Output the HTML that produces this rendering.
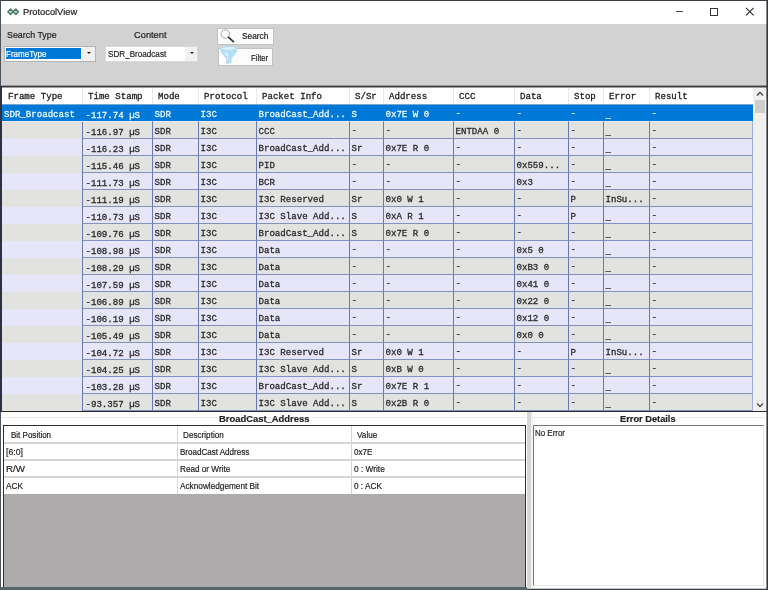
<!DOCTYPE html>
<html><head><meta charset="utf-8"><title>ProtocolView</title>
<style>
html,body{margin:0;padding:0;}
body{width:768px;height:590px;overflow:hidden;background:#fff;position:relative;font-family:"Liberation Sans",sans-serif;color:#222;}
div,span{position:absolute;box-sizing:border-box;white-space:nowrap;}
.m{font-family:"Liberation Mono",monospace;font-size:9.1px;line-height:17px;height:17px;color:#2a2a2a;-webkit-text-stroke:0.3px #2a2a2a;transform:scaleY(0.9);transform-origin:0 70%;}
.h{font-family:"Liberation Mono",monospace;font-size:9.1px;line-height:17px;height:17px;color:#222;-webkit-text-stroke:0.3px #222;transform:scaleY(0.9);transform-origin:0 70%;}
.c{border-right:1px solid #6b78b0;border-bottom:1px solid #8490c0;height:17px;overflow:hidden;}
.g{background:#e2e2e1;}
.l{background:#e6e6f8;}
.s{background:#0078d7;border-color:#0078d7;border-bottom-color:#e4ecfa;}
.s .m,.s.m{color:#e8f6ff;-webkit-text-stroke-color:#e8f6ff;}
</style></head><body>

<div style="left:0;top:0;width:768px;height:590px;background:#fff;will-change:transform;overflow:hidden;">
<div style="left:0;top:0;width:768px;height:24px;background:#fff;"></div>
<svg style="position:absolute;left:7px;top:7.5px" width="13" height="8" viewBox="0 0 13 8"><g fill="#c4e0d6" stroke="#4d786a" stroke-width="1.5" stroke-linejoin="round"><path d="M0.9 3.8 L3.5 1.1 L6.1 3.8 L3.5 6.5 Z"/><path d="M6.2 3.8 L8.8 1.1 L11.4 3.8 L8.8 6.5 Z"/></g></svg>
<span style="left:23.20px;top:4.64px;font-family:'Liberation Sans',sans-serif;font-size:9.7px;font-weight:normal;line-height:14px;height:14px;color:#1c1c1c;-webkit-text-stroke:0.2px #1c1c1c;transform-origin:0 50%;transform:scaleX(0.960);">ProtocolView</span>
<div style="left:675.7px;top:11.1px;width:7.6px;height:1.2px;background:#4a4a4a;"></div>
<div style="left:710px;top:7.7px;width:8px;height:8px;border:1px solid #333;"></div>
<svg style="position:absolute;left:745px;top:7px" width="10" height="10" viewBox="0 0 10 10"><path d="M1 0.8 L8.6 8.4 M8.6 0.8 L1 8.4" stroke="#333" stroke-width="1.2" fill="none"/></svg>
<div style="left:0;top:24px;width:768px;height:62px;background:#d3d2d2;"></div>
<span style="left:6.50px;top:27.64px;font-family:'Liberation Sans',sans-serif;font-size:9.7px;font-weight:normal;line-height:14px;height:14px;color:#1c1c1c;-webkit-text-stroke:0.2px #1c1c1c;transform-origin:0 50%;transform:scaleX(0.915);">Search Type</span>
<span style="left:134.00px;top:27.64px;font-family:'Liberation Sans',sans-serif;font-size:9.7px;font-weight:normal;line-height:14px;height:14px;color:#1c1c1c;-webkit-text-stroke:0.2px #1c1c1c;transform-origin:0 50%;transform:scaleX(0.959);">Content</span>
<div style="left:4px;top:46px;width:92px;height:15.5px;background:#fff;border:1px solid #b4b4b4;"></div>
<div style="left:5.5px;top:47.8px;width:75.5px;height:11.5px;background:#0078d7;"></div>
<span style="left:6.00px;top:46.67px;font-family:'Liberation Sans',sans-serif;font-size:9.6px;font-weight:normal;line-height:14px;height:14px;color:#fff;-webkit-text-stroke:0.2px #fff;transform-origin:0 50%;transform:scaleX(0.835);">FrameType</span>
<div style="left:82px;top:47px;width:13px;height:13.5px;background:#f0f0f0;"></div>
<div style="left:87.4px;top:52.4px;width:0;height:0;border-left:2.2px solid transparent;border-right:2.2px solid transparent;border-top:2.4px solid #222;"></div>
<div style="left:104.5px;top:45.5px;width:93.5px;height:16.5px;background:#fff;border:1px solid #dadada;"></div>
<span style="left:107.50px;top:46.67px;font-family:'Liberation Sans',sans-serif;font-size:9.6px;font-weight:normal;line-height:14px;height:14px;color:#222;-webkit-text-stroke:0.2px #222;transform-origin:0 50%;transform:scaleX(0.846);">SDR_Broadcast</span>
<div style="left:184.5px;top:46.5px;width:12.5px;height:14.5px;background:#f2f2f2;"></div>
<div style="left:189.6px;top:52.4px;width:0;height:0;border-left:2.2px solid transparent;border-right:2.2px solid transparent;border-top:2.4px solid #222;"></div>
<div style="left:217.3px;top:27.5px;width:56.3px;height:17.1px;background:#fcfcfc;border:1px solid #c2c2c2;"></div>
<svg style="position:absolute;left:219px;top:28px" width="18" height="17" viewBox="0 0 18 17"><circle cx="6.25" cy="6" r="4.2" fill="#fbfcfd" stroke="#a9adb0" stroke-width="1"/><path d="M9.6 9.3 L14.4 13.7" stroke="#333" stroke-width="1.7" stroke-linecap="round"/></svg>
<span style="left:242.00px;top:28.67px;font-family:'Liberation Sans',sans-serif;font-size:9.6px;font-weight:normal;line-height:14px;height:14px;color:#222;-webkit-text-stroke:0.2px #222;transform-origin:0 50%;transform:scaleX(0.865);">Search</span>
<div style="left:218px;top:48.1px;width:55px;height:17.7px;background:#fcfcfc;border:1px solid #c2c2c2;"></div>
<svg style="position:absolute;left:220px;top:45px" width="18" height="20" viewBox="0 0 18 20"><path d="M1 3.6 L16.6 3.6 L16.6 6.6 L11 13.6 L11 17.4 L6.6 18.4 L6.6 13.6 L1 6.6 Z" fill="#b3e0f6" stroke="#a3d6f0" stroke-width="0.7"/><ellipse cx="8.8" cy="3.4" rx="7.8" ry="1.9" fill="#dbf1fb" stroke="#a9daf1" stroke-width="0.7"/><path d="M4 7.5 L8 7.5 L8 16 L7.4 16 L7.4 12.8 Z" fill="#dff3fc" opacity="0.8"/></svg>
<span style="left:250.50px;top:50.67px;font-family:'Liberation Sans',sans-serif;font-size:9.6px;font-weight:normal;line-height:14px;height:14px;color:#222;-webkit-text-stroke:0.2px #222;transform-origin:0 50%;transform:scaleX(0.806);">Filter</span>
<div style="left:0;top:85px;width:768px;height:1px;background:rgba(60,60,60,0.4);"></div>
<div style="left:0;top:86px;width:768px;height:1px;background:#3a3a3a;"></div>
<div style="left:0;top:87px;width:768px;height:1px;background:rgba(60,60,60,0.5);"></div>
<div style="left:2px;top:88px;width:764px;height:17px;background:#fff;"></div>
<span class="h" style="left:8px;top:88px;">Frame Type</span>
<span class="h" style="left:88px;top:88px;">Time Stamp</span>
<div style="left:82px;top:88px;width:1px;height:16px;background:#e9e9e9;"></div>
<span class="h" style="left:158px;top:88px;">Mode</span>
<div style="left:152px;top:88px;width:1px;height:16px;background:#e9e9e9;"></div>
<span class="h" style="left:204px;top:88px;">Protocol</span>
<div style="left:198px;top:88px;width:1px;height:16px;background:#e9e9e9;"></div>
<span class="h" style="left:262px;top:88px;">Packet Info</span>
<div style="left:256px;top:88px;width:1px;height:16px;background:#e9e9e9;"></div>
<span class="h" style="left:355px;top:88px;">S/Sr</span>
<div style="left:349px;top:88px;width:1px;height:16px;background:#e9e9e9;"></div>
<span class="h" style="left:389px;top:88px;">Address</span>
<div style="left:383px;top:88px;width:1px;height:16px;background:#e9e9e9;"></div>
<span class="h" style="left:459px;top:88px;">CCC</span>
<div style="left:453px;top:88px;width:1px;height:16px;background:#e9e9e9;"></div>
<span class="h" style="left:520px;top:88px;">Data</span>
<div style="left:514px;top:88px;width:1px;height:16px;background:#e9e9e9;"></div>
<span class="h" style="left:574px;top:88px;">Stop</span>
<div style="left:568px;top:88px;width:1px;height:16px;background:#e9e9e9;"></div>
<span class="h" style="left:609px;top:88px;">Error</span>
<div style="left:603px;top:88px;width:1px;height:16px;background:#e9e9e9;"></div>
<span class="h" style="left:655px;top:88px;">Result</span>
<div style="left:649px;top:88px;width:1px;height:16px;background:#e9e9e9;"></div>
<div class="s" style="left:2px;top:105px;width:80px;height:17px;"></div>
<span class="m" style="left:4px;top:105.5px;color:#e8f6ff;-webkit-text-stroke-color:#e8f6ff;">SDR_Broadcast</span>
<div style="left:82px;top:105px;width:1px;height:17px;background:#0078d7;"></div>
<div class="c s" style="left:83px;top:105px;width:70px;"><span class="m" style="left:2.5px;top:1.5px;">-117.74 µS</span></div>
<div class="c s" style="left:153px;top:105px;width:46px;"><span class="m" style="left:1.5px;top:0.5px;">SDR</span></div>
<div class="c s" style="left:199px;top:105px;width:58px;"><span class="m" style="left:1.5px;top:0.5px;">I3C</span></div>
<div class="c s" style="left:257px;top:105px;width:93px;"><span class="m" style="left:1.5px;top:0.5px;">BroadCast_Add...</span></div>
<div class="c s" style="left:350px;top:105px;width:34px;"><span class="m" style="left:1.5px;top:0.5px;">S</span></div>
<div class="c s" style="left:384px;top:105px;width:70px;"><span class="m" style="left:1.5px;top:0.5px;">0x7E W 0</span></div>
<div class="c s" style="left:454px;top:105px;width:61px;"><span class="m" style="left:1.5px;top:-0.4px;">-</span></div>
<div class="c s" style="left:515px;top:105px;width:54px;"><span class="m" style="left:1.5px;top:-0.4px;">-</span></div>
<div class="c s" style="left:569px;top:105px;width:35px;"><span class="m" style="left:1.5px;top:-0.4px;">-</span></div>
<div class="c s" style="left:604px;top:105px;width:46px;"><span class="m" style="left:1.5px;top:1.5px;">_</span></div>
<div class="c s" style="left:650px;top:105px;width:103px;"><span class="m" style="left:1.5px;top:-0.4px;">-</span></div>
<div class="g" style="left:2px;top:122px;width:80px;height:17px;"></div>
<div style="left:82px;top:122px;width:1px;height:17px;background:#6b78b0;"></div>
<div class="c g" style="left:83px;top:122px;width:70px;"><span class="m" style="left:2.5px;top:1.5px;">-116.97 µS</span></div>
<div class="c g" style="left:153px;top:122px;width:46px;"><span class="m" style="left:1.5px;top:0.5px;">SDR</span></div>
<div class="c g" style="left:199px;top:122px;width:58px;"><span class="m" style="left:1.5px;top:0.5px;">I3C</span></div>
<div class="c g" style="left:257px;top:122px;width:93px;"><span class="m" style="left:1.5px;top:0.5px;">CCC</span></div>
<div class="c g" style="left:350px;top:122px;width:34px;"><span class="m" style="left:1.5px;top:-0.4px;">-</span></div>
<div class="c g" style="left:384px;top:122px;width:70px;"><span class="m" style="left:1.5px;top:-0.4px;">-</span></div>
<div class="c g" style="left:454px;top:122px;width:61px;"><span class="m" style="left:1.5px;top:0.5px;">ENTDAA 0</span></div>
<div class="c g" style="left:515px;top:122px;width:54px;"><span class="m" style="left:1.5px;top:-0.4px;">-</span></div>
<div class="c g" style="left:569px;top:122px;width:35px;"><span class="m" style="left:1.5px;top:-0.4px;">-</span></div>
<div class="c g" style="left:604px;top:122px;width:46px;"><span class="m" style="left:1.5px;top:1.5px;">_</span></div>
<div class="c g" style="left:650px;top:122px;width:103px;border-right-color:#a4add4;"><span class="m" style="left:1.5px;top:-0.4px;">-</span></div>
<div class="l" style="left:2px;top:139px;width:80px;height:17px;"></div>
<div style="left:82px;top:139px;width:1px;height:17px;background:#6b78b0;"></div>
<div class="c l" style="left:83px;top:139px;width:70px;"><span class="m" style="left:2.5px;top:1.5px;">-116.23 µS</span></div>
<div class="c l" style="left:153px;top:139px;width:46px;"><span class="m" style="left:1.5px;top:0.5px;">SDR</span></div>
<div class="c l" style="left:199px;top:139px;width:58px;"><span class="m" style="left:1.5px;top:0.5px;">I3C</span></div>
<div class="c l" style="left:257px;top:139px;width:93px;"><span class="m" style="left:1.5px;top:0.5px;">BroadCast_Add...</span></div>
<div class="c l" style="left:350px;top:139px;width:34px;"><span class="m" style="left:1.5px;top:0.5px;">Sr</span></div>
<div class="c l" style="left:384px;top:139px;width:70px;"><span class="m" style="left:1.5px;top:0.5px;">0x7E R 0</span></div>
<div class="c l" style="left:454px;top:139px;width:61px;"><span class="m" style="left:1.5px;top:-0.4px;">-</span></div>
<div class="c l" style="left:515px;top:139px;width:54px;"><span class="m" style="left:1.5px;top:-0.4px;">-</span></div>
<div class="c l" style="left:569px;top:139px;width:35px;"><span class="m" style="left:1.5px;top:-0.4px;">-</span></div>
<div class="c l" style="left:604px;top:139px;width:46px;"><span class="m" style="left:1.5px;top:1.5px;">_</span></div>
<div class="c l" style="left:650px;top:139px;width:103px;border-right-color:#a4add4;"><span class="m" style="left:1.5px;top:-0.4px;">-</span></div>
<div class="g" style="left:2px;top:156px;width:80px;height:17px;"></div>
<div style="left:82px;top:156px;width:1px;height:17px;background:#6b78b0;"></div>
<div class="c g" style="left:83px;top:156px;width:70px;"><span class="m" style="left:2.5px;top:1.5px;">-115.46 µS</span></div>
<div class="c g" style="left:153px;top:156px;width:46px;"><span class="m" style="left:1.5px;top:0.5px;">SDR</span></div>
<div class="c g" style="left:199px;top:156px;width:58px;"><span class="m" style="left:1.5px;top:0.5px;">I3C</span></div>
<div class="c g" style="left:257px;top:156px;width:93px;"><span class="m" style="left:1.5px;top:0.5px;">PID</span></div>
<div class="c g" style="left:350px;top:156px;width:34px;"><span class="m" style="left:1.5px;top:-0.4px;">-</span></div>
<div class="c g" style="left:384px;top:156px;width:70px;"><span class="m" style="left:1.5px;top:-0.4px;">-</span></div>
<div class="c g" style="left:454px;top:156px;width:61px;"><span class="m" style="left:1.5px;top:-0.4px;">-</span></div>
<div class="c g" style="left:515px;top:156px;width:54px;"><span class="m" style="left:1.5px;top:0.5px;">0x559...</span></div>
<div class="c g" style="left:569px;top:156px;width:35px;"><span class="m" style="left:1.5px;top:-0.4px;">-</span></div>
<div class="c g" style="left:604px;top:156px;width:46px;"><span class="m" style="left:1.5px;top:1.5px;">_</span></div>
<div class="c g" style="left:650px;top:156px;width:103px;border-right-color:#a4add4;"><span class="m" style="left:1.5px;top:-0.4px;">-</span></div>
<div class="l" style="left:2px;top:173px;width:80px;height:17px;"></div>
<div style="left:82px;top:173px;width:1px;height:17px;background:#6b78b0;"></div>
<div class="c l" style="left:83px;top:173px;width:70px;"><span class="m" style="left:2.5px;top:1.5px;">-111.73 µS</span></div>
<div class="c l" style="left:153px;top:173px;width:46px;"><span class="m" style="left:1.5px;top:0.5px;">SDR</span></div>
<div class="c l" style="left:199px;top:173px;width:58px;"><span class="m" style="left:1.5px;top:0.5px;">I3C</span></div>
<div class="c l" style="left:257px;top:173px;width:93px;"><span class="m" style="left:1.5px;top:0.5px;">BCR</span></div>
<div class="c l" style="left:350px;top:173px;width:34px;"><span class="m" style="left:1.5px;top:-0.4px;">-</span></div>
<div class="c l" style="left:384px;top:173px;width:70px;"><span class="m" style="left:1.5px;top:-0.4px;">-</span></div>
<div class="c l" style="left:454px;top:173px;width:61px;"><span class="m" style="left:1.5px;top:-0.4px;">-</span></div>
<div class="c l" style="left:515px;top:173px;width:54px;"><span class="m" style="left:1.5px;top:0.5px;">0x3</span></div>
<div class="c l" style="left:569px;top:173px;width:35px;"><span class="m" style="left:1.5px;top:-0.4px;">-</span></div>
<div class="c l" style="left:604px;top:173px;width:46px;"><span class="m" style="left:1.5px;top:1.5px;">_</span></div>
<div class="c l" style="left:650px;top:173px;width:103px;border-right-color:#a4add4;"><span class="m" style="left:1.5px;top:-0.4px;">-</span></div>
<div class="g" style="left:2px;top:190px;width:80px;height:17px;"></div>
<div style="left:82px;top:190px;width:1px;height:17px;background:#6b78b0;"></div>
<div class="c g" style="left:83px;top:190px;width:70px;"><span class="m" style="left:2.5px;top:1.5px;">-111.19 µS</span></div>
<div class="c g" style="left:153px;top:190px;width:46px;"><span class="m" style="left:1.5px;top:0.5px;">SDR</span></div>
<div class="c g" style="left:199px;top:190px;width:58px;"><span class="m" style="left:1.5px;top:0.5px;">I3C</span></div>
<div class="c g" style="left:257px;top:190px;width:93px;"><span class="m" style="left:1.5px;top:0.5px;">I3C Reserved</span></div>
<div class="c g" style="left:350px;top:190px;width:34px;"><span class="m" style="left:1.5px;top:0.5px;">Sr</span></div>
<div class="c g" style="left:384px;top:190px;width:70px;"><span class="m" style="left:1.5px;top:0.5px;">0x0 W 1</span></div>
<div class="c g" style="left:454px;top:190px;width:61px;"><span class="m" style="left:1.5px;top:-0.4px;">-</span></div>
<div class="c g" style="left:515px;top:190px;width:54px;"><span class="m" style="left:1.5px;top:-0.4px;">-</span></div>
<div class="c g" style="left:569px;top:190px;width:35px;"><span class="m" style="left:1.5px;top:0.5px;">P</span></div>
<div class="c g" style="left:604px;top:190px;width:46px;"><span class="m" style="left:1.5px;top:0.5px;">InSu...</span></div>
<div class="c g" style="left:650px;top:190px;width:103px;border-right-color:#a4add4;"><span class="m" style="left:1.5px;top:-0.4px;">-</span></div>
<div class="l" style="left:2px;top:207px;width:80px;height:17px;"></div>
<div style="left:82px;top:207px;width:1px;height:17px;background:#6b78b0;"></div>
<div class="c l" style="left:83px;top:207px;width:70px;"><span class="m" style="left:2.5px;top:1.5px;">-110.73 µS</span></div>
<div class="c l" style="left:153px;top:207px;width:46px;"><span class="m" style="left:1.5px;top:0.5px;">SDR</span></div>
<div class="c l" style="left:199px;top:207px;width:58px;"><span class="m" style="left:1.5px;top:0.5px;">I3C</span></div>
<div class="c l" style="left:257px;top:207px;width:93px;"><span class="m" style="left:1.5px;top:0.5px;">I3C Slave Add...</span></div>
<div class="c l" style="left:350px;top:207px;width:34px;"><span class="m" style="left:1.5px;top:0.5px;">S</span></div>
<div class="c l" style="left:384px;top:207px;width:70px;"><span class="m" style="left:1.5px;top:0.5px;">0xA R 1</span></div>
<div class="c l" style="left:454px;top:207px;width:61px;"><span class="m" style="left:1.5px;top:-0.4px;">-</span></div>
<div class="c l" style="left:515px;top:207px;width:54px;"><span class="m" style="left:1.5px;top:-0.4px;">-</span></div>
<div class="c l" style="left:569px;top:207px;width:35px;"><span class="m" style="left:1.5px;top:0.5px;">P</span></div>
<div class="c l" style="left:604px;top:207px;width:46px;"><span class="m" style="left:1.5px;top:1.5px;">_</span></div>
<div class="c l" style="left:650px;top:207px;width:103px;border-right-color:#a4add4;"><span class="m" style="left:1.5px;top:-0.4px;">-</span></div>
<div class="g" style="left:2px;top:224px;width:80px;height:17px;"></div>
<div style="left:82px;top:224px;width:1px;height:17px;background:#6b78b0;"></div>
<div class="c g" style="left:83px;top:224px;width:70px;"><span class="m" style="left:2.5px;top:1.5px;">-109.76 µS</span></div>
<div class="c g" style="left:153px;top:224px;width:46px;"><span class="m" style="left:1.5px;top:0.5px;">SDR</span></div>
<div class="c g" style="left:199px;top:224px;width:58px;"><span class="m" style="left:1.5px;top:0.5px;">I3C</span></div>
<div class="c g" style="left:257px;top:224px;width:93px;"><span class="m" style="left:1.5px;top:0.5px;">BroadCast_Add...</span></div>
<div class="c g" style="left:350px;top:224px;width:34px;"><span class="m" style="left:1.5px;top:0.5px;">S</span></div>
<div class="c g" style="left:384px;top:224px;width:70px;"><span class="m" style="left:1.5px;top:0.5px;">0x7E R 0</span></div>
<div class="c g" style="left:454px;top:224px;width:61px;"><span class="m" style="left:1.5px;top:-0.4px;">-</span></div>
<div class="c g" style="left:515px;top:224px;width:54px;"><span class="m" style="left:1.5px;top:-0.4px;">-</span></div>
<div class="c g" style="left:569px;top:224px;width:35px;"><span class="m" style="left:1.5px;top:-0.4px;">-</span></div>
<div class="c g" style="left:604px;top:224px;width:46px;"><span class="m" style="left:1.5px;top:1.5px;">_</span></div>
<div class="c g" style="left:650px;top:224px;width:103px;border-right-color:#a4add4;"><span class="m" style="left:1.5px;top:-0.4px;">-</span></div>
<div class="l" style="left:2px;top:241px;width:80px;height:17px;"></div>
<div style="left:82px;top:241px;width:1px;height:17px;background:#6b78b0;"></div>
<div class="c l" style="left:83px;top:241px;width:70px;"><span class="m" style="left:2.5px;top:1.5px;">-108.98 µS</span></div>
<div class="c l" style="left:153px;top:241px;width:46px;"><span class="m" style="left:1.5px;top:0.5px;">SDR</span></div>
<div class="c l" style="left:199px;top:241px;width:58px;"><span class="m" style="left:1.5px;top:0.5px;">I3C</span></div>
<div class="c l" style="left:257px;top:241px;width:93px;"><span class="m" style="left:1.5px;top:0.5px;">Data</span></div>
<div class="c l" style="left:350px;top:241px;width:34px;"><span class="m" style="left:1.5px;top:-0.4px;">-</span></div>
<div class="c l" style="left:384px;top:241px;width:70px;"><span class="m" style="left:1.5px;top:-0.4px;">-</span></div>
<div class="c l" style="left:454px;top:241px;width:61px;"><span class="m" style="left:1.5px;top:-0.4px;">-</span></div>
<div class="c l" style="left:515px;top:241px;width:54px;"><span class="m" style="left:1.5px;top:0.5px;">0x5 0</span></div>
<div class="c l" style="left:569px;top:241px;width:35px;"><span class="m" style="left:1.5px;top:-0.4px;">-</span></div>
<div class="c l" style="left:604px;top:241px;width:46px;"><span class="m" style="left:1.5px;top:1.5px;">_</span></div>
<div class="c l" style="left:650px;top:241px;width:103px;border-right-color:#a4add4;"><span class="m" style="left:1.5px;top:-0.4px;">-</span></div>
<div class="g" style="left:2px;top:258px;width:80px;height:17px;"></div>
<div style="left:82px;top:258px;width:1px;height:17px;background:#6b78b0;"></div>
<div class="c g" style="left:83px;top:258px;width:70px;"><span class="m" style="left:2.5px;top:1.5px;">-108.29 µS</span></div>
<div class="c g" style="left:153px;top:258px;width:46px;"><span class="m" style="left:1.5px;top:0.5px;">SDR</span></div>
<div class="c g" style="left:199px;top:258px;width:58px;"><span class="m" style="left:1.5px;top:0.5px;">I3C</span></div>
<div class="c g" style="left:257px;top:258px;width:93px;"><span class="m" style="left:1.5px;top:0.5px;">Data</span></div>
<div class="c g" style="left:350px;top:258px;width:34px;"><span class="m" style="left:1.5px;top:-0.4px;">-</span></div>
<div class="c g" style="left:384px;top:258px;width:70px;"><span class="m" style="left:1.5px;top:-0.4px;">-</span></div>
<div class="c g" style="left:454px;top:258px;width:61px;"><span class="m" style="left:1.5px;top:-0.4px;">-</span></div>
<div class="c g" style="left:515px;top:258px;width:54px;"><span class="m" style="left:1.5px;top:0.5px;">0xB3 0</span></div>
<div class="c g" style="left:569px;top:258px;width:35px;"><span class="m" style="left:1.5px;top:-0.4px;">-</span></div>
<div class="c g" style="left:604px;top:258px;width:46px;"><span class="m" style="left:1.5px;top:1.5px;">_</span></div>
<div class="c g" style="left:650px;top:258px;width:103px;border-right-color:#a4add4;"><span class="m" style="left:1.5px;top:-0.4px;">-</span></div>
<div class="l" style="left:2px;top:275px;width:80px;height:17px;"></div>
<div style="left:82px;top:275px;width:1px;height:17px;background:#6b78b0;"></div>
<div class="c l" style="left:83px;top:275px;width:70px;"><span class="m" style="left:2.5px;top:1.5px;">-107.59 µS</span></div>
<div class="c l" style="left:153px;top:275px;width:46px;"><span class="m" style="left:1.5px;top:0.5px;">SDR</span></div>
<div class="c l" style="left:199px;top:275px;width:58px;"><span class="m" style="left:1.5px;top:0.5px;">I3C</span></div>
<div class="c l" style="left:257px;top:275px;width:93px;"><span class="m" style="left:1.5px;top:0.5px;">Data</span></div>
<div class="c l" style="left:350px;top:275px;width:34px;"><span class="m" style="left:1.5px;top:-0.4px;">-</span></div>
<div class="c l" style="left:384px;top:275px;width:70px;"><span class="m" style="left:1.5px;top:-0.4px;">-</span></div>
<div class="c l" style="left:454px;top:275px;width:61px;"><span class="m" style="left:1.5px;top:-0.4px;">-</span></div>
<div class="c l" style="left:515px;top:275px;width:54px;"><span class="m" style="left:1.5px;top:0.5px;">0x41 0</span></div>
<div class="c l" style="left:569px;top:275px;width:35px;"><span class="m" style="left:1.5px;top:-0.4px;">-</span></div>
<div class="c l" style="left:604px;top:275px;width:46px;"><span class="m" style="left:1.5px;top:1.5px;">_</span></div>
<div class="c l" style="left:650px;top:275px;width:103px;border-right-color:#a4add4;"><span class="m" style="left:1.5px;top:-0.4px;">-</span></div>
<div class="g" style="left:2px;top:292px;width:80px;height:17px;"></div>
<div style="left:82px;top:292px;width:1px;height:17px;background:#6b78b0;"></div>
<div class="c g" style="left:83px;top:292px;width:70px;"><span class="m" style="left:2.5px;top:1.5px;">-106.89 µS</span></div>
<div class="c g" style="left:153px;top:292px;width:46px;"><span class="m" style="left:1.5px;top:0.5px;">SDR</span></div>
<div class="c g" style="left:199px;top:292px;width:58px;"><span class="m" style="left:1.5px;top:0.5px;">I3C</span></div>
<div class="c g" style="left:257px;top:292px;width:93px;"><span class="m" style="left:1.5px;top:0.5px;">Data</span></div>
<div class="c g" style="left:350px;top:292px;width:34px;"><span class="m" style="left:1.5px;top:-0.4px;">-</span></div>
<div class="c g" style="left:384px;top:292px;width:70px;"><span class="m" style="left:1.5px;top:-0.4px;">-</span></div>
<div class="c g" style="left:454px;top:292px;width:61px;"><span class="m" style="left:1.5px;top:-0.4px;">-</span></div>
<div class="c g" style="left:515px;top:292px;width:54px;"><span class="m" style="left:1.5px;top:0.5px;">0x22 0</span></div>
<div class="c g" style="left:569px;top:292px;width:35px;"><span class="m" style="left:1.5px;top:-0.4px;">-</span></div>
<div class="c g" style="left:604px;top:292px;width:46px;"><span class="m" style="left:1.5px;top:1.5px;">_</span></div>
<div class="c g" style="left:650px;top:292px;width:103px;border-right-color:#a4add4;"><span class="m" style="left:1.5px;top:-0.4px;">-</span></div>
<div class="l" style="left:2px;top:309px;width:80px;height:17px;"></div>
<div style="left:82px;top:309px;width:1px;height:17px;background:#6b78b0;"></div>
<div class="c l" style="left:83px;top:309px;width:70px;"><span class="m" style="left:2.5px;top:1.5px;">-106.19 µS</span></div>
<div class="c l" style="left:153px;top:309px;width:46px;"><span class="m" style="left:1.5px;top:0.5px;">SDR</span></div>
<div class="c l" style="left:199px;top:309px;width:58px;"><span class="m" style="left:1.5px;top:0.5px;">I3C</span></div>
<div class="c l" style="left:257px;top:309px;width:93px;"><span class="m" style="left:1.5px;top:0.5px;">Data</span></div>
<div class="c l" style="left:350px;top:309px;width:34px;"><span class="m" style="left:1.5px;top:-0.4px;">-</span></div>
<div class="c l" style="left:384px;top:309px;width:70px;"><span class="m" style="left:1.5px;top:-0.4px;">-</span></div>
<div class="c l" style="left:454px;top:309px;width:61px;"><span class="m" style="left:1.5px;top:-0.4px;">-</span></div>
<div class="c l" style="left:515px;top:309px;width:54px;"><span class="m" style="left:1.5px;top:0.5px;">0x12 0</span></div>
<div class="c l" style="left:569px;top:309px;width:35px;"><span class="m" style="left:1.5px;top:-0.4px;">-</span></div>
<div class="c l" style="left:604px;top:309px;width:46px;"><span class="m" style="left:1.5px;top:1.5px;">_</span></div>
<div class="c l" style="left:650px;top:309px;width:103px;border-right-color:#a4add4;"><span class="m" style="left:1.5px;top:-0.4px;">-</span></div>
<div class="g" style="left:2px;top:326px;width:80px;height:17px;"></div>
<div style="left:82px;top:326px;width:1px;height:17px;background:#6b78b0;"></div>
<div class="c g" style="left:83px;top:326px;width:70px;"><span class="m" style="left:2.5px;top:1.5px;">-105.49 µS</span></div>
<div class="c g" style="left:153px;top:326px;width:46px;"><span class="m" style="left:1.5px;top:0.5px;">SDR</span></div>
<div class="c g" style="left:199px;top:326px;width:58px;"><span class="m" style="left:1.5px;top:0.5px;">I3C</span></div>
<div class="c g" style="left:257px;top:326px;width:93px;"><span class="m" style="left:1.5px;top:0.5px;">Data</span></div>
<div class="c g" style="left:350px;top:326px;width:34px;"><span class="m" style="left:1.5px;top:-0.4px;">-</span></div>
<div class="c g" style="left:384px;top:326px;width:70px;"><span class="m" style="left:1.5px;top:-0.4px;">-</span></div>
<div class="c g" style="left:454px;top:326px;width:61px;"><span class="m" style="left:1.5px;top:-0.4px;">-</span></div>
<div class="c g" style="left:515px;top:326px;width:54px;"><span class="m" style="left:1.5px;top:0.5px;">0x0 0</span></div>
<div class="c g" style="left:569px;top:326px;width:35px;"><span class="m" style="left:1.5px;top:-0.4px;">-</span></div>
<div class="c g" style="left:604px;top:326px;width:46px;"><span class="m" style="left:1.5px;top:1.5px;">_</span></div>
<div class="c g" style="left:650px;top:326px;width:103px;border-right-color:#a4add4;"><span class="m" style="left:1.5px;top:-0.4px;">-</span></div>
<div class="l" style="left:2px;top:343px;width:80px;height:17px;"></div>
<div style="left:82px;top:343px;width:1px;height:17px;background:#6b78b0;"></div>
<div class="c l" style="left:83px;top:343px;width:70px;"><span class="m" style="left:2.5px;top:1.5px;">-104.72 µS</span></div>
<div class="c l" style="left:153px;top:343px;width:46px;"><span class="m" style="left:1.5px;top:0.5px;">SDR</span></div>
<div class="c l" style="left:199px;top:343px;width:58px;"><span class="m" style="left:1.5px;top:0.5px;">I3C</span></div>
<div class="c l" style="left:257px;top:343px;width:93px;"><span class="m" style="left:1.5px;top:0.5px;">I3C Reserved</span></div>
<div class="c l" style="left:350px;top:343px;width:34px;"><span class="m" style="left:1.5px;top:0.5px;">Sr</span></div>
<div class="c l" style="left:384px;top:343px;width:70px;"><span class="m" style="left:1.5px;top:0.5px;">0x0 W 1</span></div>
<div class="c l" style="left:454px;top:343px;width:61px;"><span class="m" style="left:1.5px;top:-0.4px;">-</span></div>
<div class="c l" style="left:515px;top:343px;width:54px;"><span class="m" style="left:1.5px;top:-0.4px;">-</span></div>
<div class="c l" style="left:569px;top:343px;width:35px;"><span class="m" style="left:1.5px;top:0.5px;">P</span></div>
<div class="c l" style="left:604px;top:343px;width:46px;"><span class="m" style="left:1.5px;top:0.5px;">InSu...</span></div>
<div class="c l" style="left:650px;top:343px;width:103px;border-right-color:#a4add4;"><span class="m" style="left:1.5px;top:-0.4px;">-</span></div>
<div class="g" style="left:2px;top:360px;width:80px;height:17px;"></div>
<div style="left:82px;top:360px;width:1px;height:17px;background:#6b78b0;"></div>
<div class="c g" style="left:83px;top:360px;width:70px;"><span class="m" style="left:2.5px;top:1.5px;">-104.25 µS</span></div>
<div class="c g" style="left:153px;top:360px;width:46px;"><span class="m" style="left:1.5px;top:0.5px;">SDR</span></div>
<div class="c g" style="left:199px;top:360px;width:58px;"><span class="m" style="left:1.5px;top:0.5px;">I3C</span></div>
<div class="c g" style="left:257px;top:360px;width:93px;"><span class="m" style="left:1.5px;top:0.5px;">I3C Slave Add...</span></div>
<div class="c g" style="left:350px;top:360px;width:34px;"><span class="m" style="left:1.5px;top:0.5px;">S</span></div>
<div class="c g" style="left:384px;top:360px;width:70px;"><span class="m" style="left:1.5px;top:0.5px;">0xB W 0</span></div>
<div class="c g" style="left:454px;top:360px;width:61px;"><span class="m" style="left:1.5px;top:-0.4px;">-</span></div>
<div class="c g" style="left:515px;top:360px;width:54px;"><span class="m" style="left:1.5px;top:-0.4px;">-</span></div>
<div class="c g" style="left:569px;top:360px;width:35px;"><span class="m" style="left:1.5px;top:-0.4px;">-</span></div>
<div class="c g" style="left:604px;top:360px;width:46px;"><span class="m" style="left:1.5px;top:1.5px;">_</span></div>
<div class="c g" style="left:650px;top:360px;width:103px;border-right-color:#a4add4;"><span class="m" style="left:1.5px;top:-0.4px;">-</span></div>
<div class="l" style="left:2px;top:377px;width:80px;height:17px;"></div>
<div style="left:82px;top:377px;width:1px;height:17px;background:#6b78b0;"></div>
<div class="c l" style="left:83px;top:377px;width:70px;"><span class="m" style="left:2.5px;top:1.5px;">-103.28 µS</span></div>
<div class="c l" style="left:153px;top:377px;width:46px;"><span class="m" style="left:1.5px;top:0.5px;">SDR</span></div>
<div class="c l" style="left:199px;top:377px;width:58px;"><span class="m" style="left:1.5px;top:0.5px;">I3C</span></div>
<div class="c l" style="left:257px;top:377px;width:93px;"><span class="m" style="left:1.5px;top:0.5px;">BroadCast_Add...</span></div>
<div class="c l" style="left:350px;top:377px;width:34px;"><span class="m" style="left:1.5px;top:0.5px;">Sr</span></div>
<div class="c l" style="left:384px;top:377px;width:70px;"><span class="m" style="left:1.5px;top:0.5px;">0x7E R 1</span></div>
<div class="c l" style="left:454px;top:377px;width:61px;"><span class="m" style="left:1.5px;top:-0.4px;">-</span></div>
<div class="c l" style="left:515px;top:377px;width:54px;"><span class="m" style="left:1.5px;top:-0.4px;">-</span></div>
<div class="c l" style="left:569px;top:377px;width:35px;"><span class="m" style="left:1.5px;top:-0.4px;">-</span></div>
<div class="c l" style="left:604px;top:377px;width:46px;"><span class="m" style="left:1.5px;top:1.5px;">_</span></div>
<div class="c l" style="left:650px;top:377px;width:103px;border-right-color:#a4add4;"><span class="m" style="left:1.5px;top:-0.4px;">-</span></div>
<div class="g" style="left:2px;top:394px;width:80px;height:17px;"></div>
<div style="left:82px;top:394px;width:1px;height:17px;background:#6b78b0;"></div>
<div class="c g" style="left:83px;top:394px;width:70px;"><span class="m" style="left:2.5px;top:1.5px;">-93.357 µS</span></div>
<div class="c g" style="left:153px;top:394px;width:46px;"><span class="m" style="left:1.5px;top:0.5px;">SDR</span></div>
<div class="c g" style="left:199px;top:394px;width:58px;"><span class="m" style="left:1.5px;top:0.5px;">I3C</span></div>
<div class="c g" style="left:257px;top:394px;width:93px;"><span class="m" style="left:1.5px;top:0.5px;">I3C Slave Add...</span></div>
<div class="c g" style="left:350px;top:394px;width:34px;"><span class="m" style="left:1.5px;top:0.5px;">S</span></div>
<div class="c g" style="left:384px;top:394px;width:70px;"><span class="m" style="left:1.5px;top:0.5px;">0x2B R 0</span></div>
<div class="c g" style="left:454px;top:394px;width:61px;"><span class="m" style="left:1.5px;top:-0.4px;">-</span></div>
<div class="c g" style="left:515px;top:394px;width:54px;"><span class="m" style="left:1.5px;top:-0.4px;">-</span></div>
<div class="c g" style="left:569px;top:394px;width:35px;"><span class="m" style="left:1.5px;top:-0.4px;">-</span></div>
<div class="c g" style="left:604px;top:394px;width:46px;"><span class="m" style="left:1.5px;top:1.5px;">_</span></div>
<div class="c g" style="left:650px;top:394px;width:103px;border-right-color:#a4add4;"><span class="m" style="left:1.5px;top:-0.4px;">-</span></div>
<div style="left:2px;top:104px;width:751px;height:1px;background:rgba(10,94,168,0.55);"></div>
<div style="left:2px;top:121px;width:81px;height:1px;background:#e4ecfa;"></div>
<div style="left:753px;top:88px;width:13.5px;height:323px;background:#f0f0f0;"></div>
<div style="left:754.7px;top:100px;width:10.6px;height:12.6px;background:#cdcdcd;"></div>
<svg style="position:absolute;left:756px;top:91px" width="8" height="6" viewBox="0 0 8 6"><path d="M1 4.5 L4 1.5 L7 4.5" stroke="#444" stroke-width="1.3" fill="none"/></svg>
<svg style="position:absolute;left:756px;top:401.5px" width="8" height="6" viewBox="0 0 8 6"><path d="M1 1.5 L4 4.5 L7 1.5" stroke="#444" stroke-width="1.3" fill="none"/></svg>
<div style="left:0;top:411px;width:768px;height:1px;background:#2a2a2a;"></div>
<div style="left:2px;top:412px;width:764px;height:176px;background:#fff;"></div>
<div style="left:2px;top:417px;width:215px;height:1px;background:#e6e6e6;"></div>
<div style="left:312px;top:417px;width:214px;height:1px;background:#e6e6e6;"></div>
<span style="left:218.80px;top:411.64px;font-family:'Liberation Sans',sans-serif;font-size:9.7px;font-weight:bold;line-height:14px;height:14px;color:#222;-webkit-text-stroke:0.2px #222;transform-origin:0 50%;transform:scaleX(0.971);">BroadCast_Address</span>
<div style="left:530px;top:417px;width:88px;height:1px;background:#e6e6e6;"></div>
<div style="left:678px;top:417px;width:86px;height:1px;background:#e6e6e6;"></div>
<span style="left:620.30px;top:411.64px;font-family:'Liberation Sans',sans-serif;font-size:9.7px;font-weight:bold;line-height:14px;height:14px;color:#222;-webkit-text-stroke:0.2px #222;transform-origin:0 50%;transform:scaleX(0.956);">Error Details</span>
<div style="left:3px;top:425px;width:523px;height:165px;background:#acaaab;border:1px solid #2c2c2c;border-bottom:none;"></div>
<div style="left:4px;top:426px;width:521px;height:67.7px;background:#fff;"></div>
<div style="left:4px;top:442px;width:521px;height:1.5px;background:#d4d4d4;"></div>
<div style="left:4px;top:459px;width:521px;height:1.5px;background:#d4d4d4;"></div>
<div style="left:4px;top:476px;width:521px;height:1.5px;background:#d4d4d4;"></div>
<div style="left:177px;top:426px;width:1px;height:67.7px;background:#d4d4d4;"></div>
<div style="left:351px;top:426px;width:1px;height:67.7px;background:#d4d4d4;"></div>
<span style="left:10.50px;top:427.67px;font-family:'Liberation Sans',sans-serif;font-size:9.6px;font-weight:normal;line-height:14px;height:14px;color:#222;-webkit-text-stroke:0.2px #222;transform-origin:0 50%;transform:scaleX(0.835);">Bit Position</span>
<span style="left:183.30px;top:427.67px;font-family:'Liberation Sans',sans-serif;font-size:9.6px;font-weight:normal;line-height:14px;height:14px;color:#222;-webkit-text-stroke:0.2px #222;transform-origin:0 50%;transform:scaleX(0.850);">Description</span>
<span style="left:357.00px;top:427.67px;font-family:'Liberation Sans',sans-serif;font-size:9.6px;font-weight:normal;line-height:14px;height:14px;color:#222;-webkit-text-stroke:0.2px #222;transform-origin:0 50%;transform:scaleX(0.852);">Value</span>
<span style="left:6.30px;top:444.67px;font-family:'Liberation Sans',sans-serif;font-size:9.6px;font-weight:normal;line-height:14px;height:14px;color:#222;-webkit-text-stroke:0.2px #222;transform-origin:0 50%;transform:scaleX(0.905);">[6:0]</span>
<span style="left:180.30px;top:444.67px;font-family:'Liberation Sans',sans-serif;font-size:9.6px;font-weight:normal;line-height:14px;height:14px;color:#222;-webkit-text-stroke:0.2px #222;transform-origin:0 50%;transform:scaleX(0.837);">BroadCast Address</span>
<span style="left:353.70px;top:444.67px;font-family:'Liberation Sans',sans-serif;font-size:9.6px;font-weight:normal;line-height:14px;height:14px;color:#222;-webkit-text-stroke:0.2px #222;transform-origin:0 50%;transform:scaleX(0.837);">0x7E</span>
<span style="left:6.30px;top:461.67px;font-family:'Liberation Sans',sans-serif;font-size:9.6px;font-weight:normal;line-height:14px;height:14px;color:#222;-webkit-text-stroke:0.2px #222;transform-origin:0 50%;transform:scaleX(1.018);">R/W</span>
<span style="left:180.30px;top:461.67px;font-family:'Liberation Sans',sans-serif;font-size:9.6px;font-weight:normal;line-height:14px;height:14px;color:#222;-webkit-text-stroke:0.2px #222;transform-origin:0 50%;transform:scaleX(0.852);">Read or Write</span>
<span style="left:353.70px;top:461.67px;font-family:'Liberation Sans',sans-serif;font-size:9.6px;font-weight:normal;line-height:14px;height:14px;color:#222;-webkit-text-stroke:0.2px #222;transform-origin:0 50%;transform:scaleX(0.866);">0 : Write</span>
<span style="left:6.30px;top:478.67px;font-family:'Liberation Sans',sans-serif;font-size:9.6px;font-weight:normal;line-height:14px;height:14px;color:#222;-webkit-text-stroke:0.2px #222;transform-origin:0 50%;transform:scaleX(0.861);">ACK</span>
<span style="left:180.30px;top:478.67px;font-family:'Liberation Sans',sans-serif;font-size:9.6px;font-weight:normal;line-height:14px;height:14px;color:#222;-webkit-text-stroke:0.2px #222;transform-origin:0 50%;transform:scaleX(0.858);">Acknowledgement Bit</span>
<span style="left:353.70px;top:478.67px;font-family:'Liberation Sans',sans-serif;font-size:9.6px;font-weight:normal;line-height:14px;height:14px;color:#222;-webkit-text-stroke:0.2px #222;transform-origin:0 50%;transform:scaleX(0.858);">0 : ACK</span>
<div style="left:527.3px;top:412px;width:3.7px;height:176px;background:#d7d5d6;"></div>
<div style="left:531px;top:412px;width:2px;height:176px;background:#f3f3f3;"></div>
<div style="left:533px;top:425px;width:231px;height:161px;background:#fff;border-left:1px solid #777;border-top:1px solid #777;border-right:1px solid #e4e4ea;border-bottom:1px solid #e4e4ea;"></div>
<span style="left:535.30px;top:425.67px;font-family:'Liberation Sans',sans-serif;font-size:9.6px;font-weight:normal;line-height:14px;height:14px;color:#222;-webkit-text-stroke:0.2px #222;transform-origin:0 50%;transform:scaleX(0.828);">No Error</span>
<div style="left:0;top:0;width:768px;height:1px;background:#3a4048;"></div>
<div style="left:0;top:0;width:1.1px;height:590px;background:#4a525c;"></div>
<div style="left:0;top:86px;width:1.9px;height:326px;background:#2b3242;"></div>
<div style="left:767px;top:0;width:1px;height:590px;background:#33383f;"></div>
<div style="left:766px;top:0;width:1px;height:590px;background:rgba(51,56,63,0.6);"></div>
<div style="left:0;top:587px;width:527px;height:3px;background:#56646c;"></div>
<div style="left:527px;top:589px;width:241px;height:1px;background:#3a4048;"></div>
<div style="left:527px;top:588px;width:241px;height:1px;background:rgba(58,64,72,0.3);"></div>
</div></body></html>
